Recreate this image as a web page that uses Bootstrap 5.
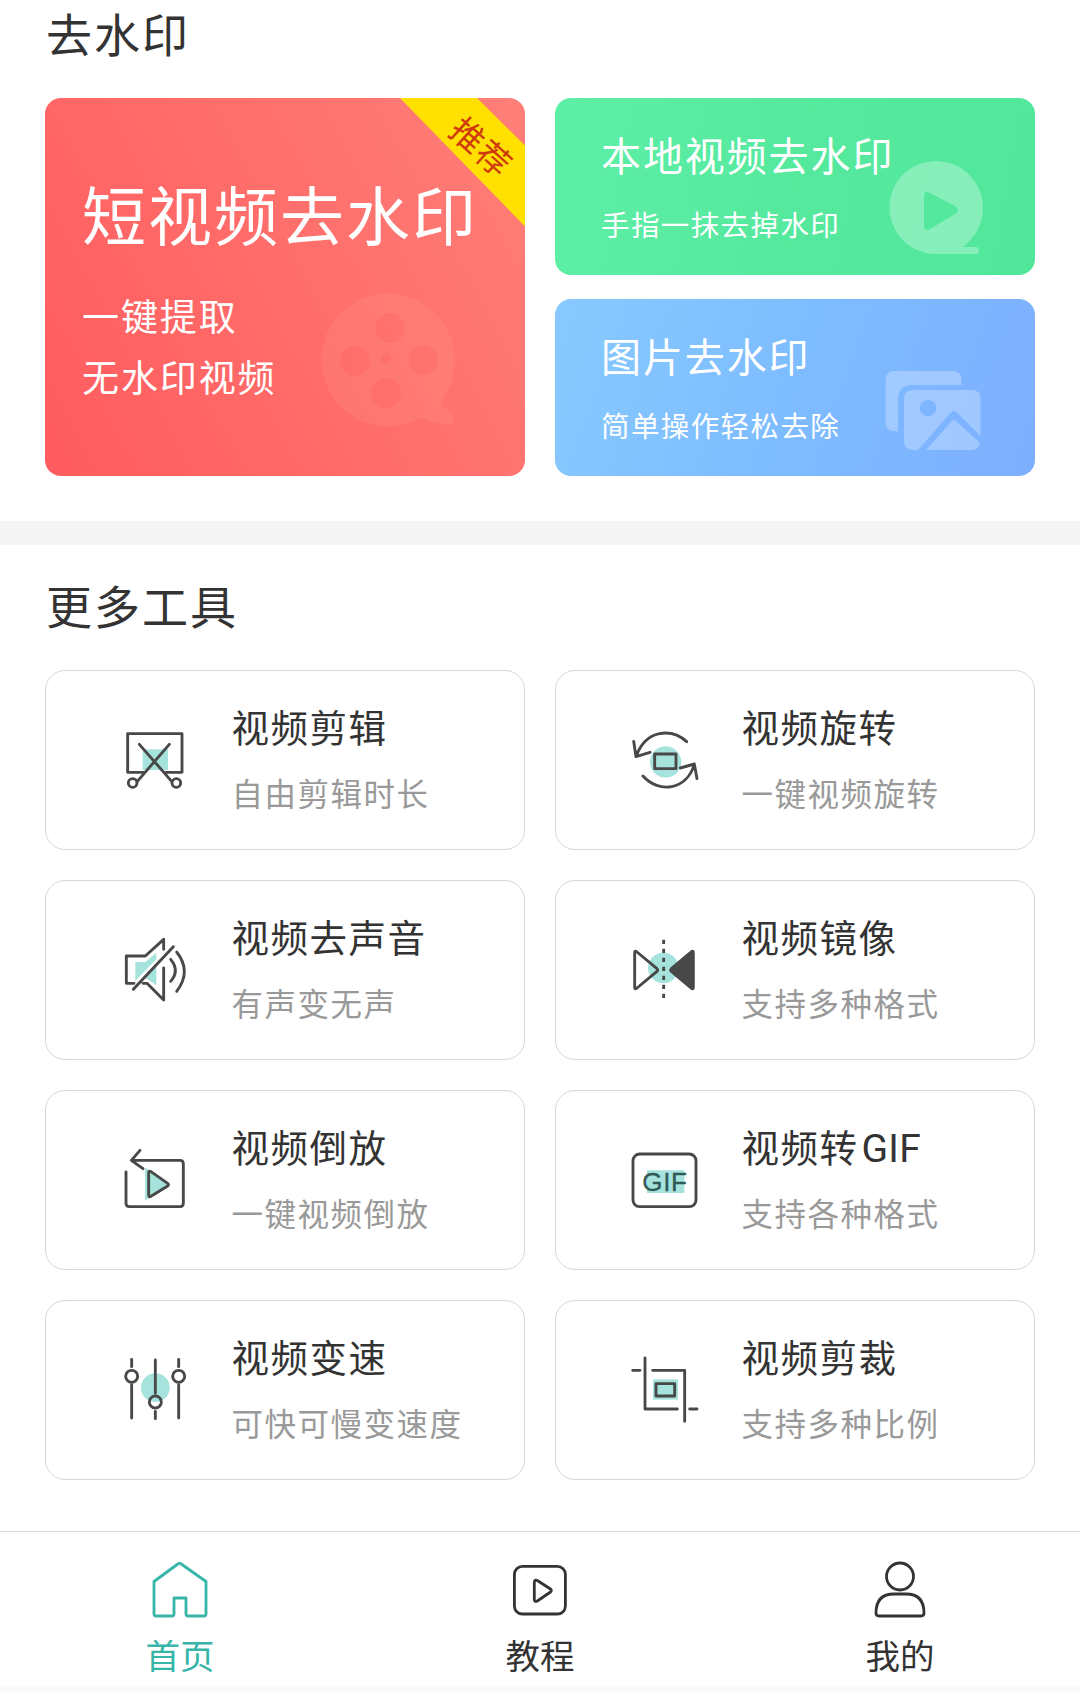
<!DOCTYPE html>
<html lang="zh-CN">
<head>
<meta charset="utf-8">
<meta name="viewport" content="width=device-width, initial-scale=1">
<title>去水印</title>
<link href="https://cdn.jsdelivr.net/npm/bootstrap@5.3.0/dist/css/bootstrap.min.css" rel="stylesheet">
<style>
body{font-family:"Noto Sans CJK SC","Noto Sans",sans-serif;background:#fff;color:#333;overflow-x:hidden}
.page{width:1080px;height:1692px;background:linear-gradient(#fff 0 1687px,#fafafa 1687px)}
.wrap{padding:0 45px}
.sec-title{font-size:46px;letter-spacing:2px;line-height:66px;margin:0;padding-left:1px;color:#333;font-weight:400}
.first-title{line-height:64px;padding-bottom:34px}
.more-title{padding-top:26px;padding-bottom:33px}
.gap-x{gap:30px}
.hero{width:480px;height:378px;border-radius:16px;color:#fff}
.hero-red{background:linear-gradient(62deg,#ff5b5e 0%,#ff6b69 45%,#ff7f78 100%);padding:79px 0 0 37px}
.hero-red h3{font-size:64px;letter-spacing:2px;line-height:70px;margin:0 0 38px;font-weight:400}
.hero-red p{font-size:37px;letter-spacing:1.9px;line-height:61px;margin:0}
.mini{height:177px;border-radius:16px;color:#fff;padding:30px 0 0 46px}
.mini h3{font-size:40px;letter-spacing:1.9px;line-height:52px;margin:0 0 24px;font-weight:400}
.mini p{font-size:28.5px;letter-spacing:1.4px;line-height:40px;margin:0}
.mini-green{background:linear-gradient(100deg,#5eefa6,#55e99e 50%,#51e79b)}
.mini-blue{background:linear-gradient(110deg,#88caff,#7dbcff 50%,#7eafff)}
.deco{position:absolute;left:0;top:0;width:100%;height:100%}
.ribbon-text{position:absolute;left:397px;top:26px;width:80px;line-height:44px;font-size:33.5px;letter-spacing:1px;text-align:center;color:#cf3a0c;transform:rotate(42deg)}
.strip{height:24px;background:#f5f5f5;margin-top:45px}
.tools{display:grid;grid-template-columns:480px 480px;gap:30px}
.tool{height:180px;border:1px solid #d6d6d6;border-radius:20px;padding-left:69px;background:#fff}
.tool svg{width:80px;height:80px;flex:none;fill:none;stroke:#484848;stroke-width:8.6;stroke-linecap:round;stroke-linejoin:round}
.tool .tint{fill:#a5e3dc;stroke:none}
.tool-text{margin-left:36.5px;padding-bottom:2px}
.tool h4{font-size:37.5px;letter-spacing:1.5px;line-height:50px;margin:0 0 16px;color:#333;font-weight:400}
.tool p{font-size:31.5px;letter-spacing:1.5px;line-height:50px;margin:0;color:#999}
.latin{font-family:Roboto,sans-serif;font-size:39px;letter-spacing:.3px;line-height:1;margin-left:3px}
.tabs{border-top:1px solid #d6d6d6;height:160px;margin-top:51px}
.tab{width:360px;color:#333;font-size:34.5px;line-height:46px;padding-top:26px;text-decoration:none}
.tab svg{width:64px;height:64px;fill:none;stroke:currentColor;stroke-width:2.8;stroke-linejoin:round;margin-bottom:9px}
.tab.on{color:#37b5a8}
</style>
</head>
<body>
<div class="page d-flex flex-column">
  <section class="wrap">
    <h2 class="sec-title first-title">去水印</h2>
    <div class="d-flex gap-x">
      <div class="hero hero-red position-relative overflow-hidden">
        <svg class="deco" viewBox="45 98 480 378">
          <path fill="#ffb09a" fill-opacity=".15" fill-rule="evenodd" d="M388 293.500A66.500 66.500 0 0 1 454.500 360C454.500 378 450 390 441 402C442 410 453 410 453 416V423C439 426 428 421 421 417C411 423 400 426.500 388 426.500A66.500 66.500 0 0 1 388 293.500zM390 313a15 15 0 1 0 .1 0zM355 346a15 15 0 1 0 .1 0zM423 345a15 15 0 1 0 .1 0zM386 378a15 15 0 1 0 .1 0zM386 354a5 5 0 1 0 .1 0z"/>
          <path fill="#ffe000" d="M400 98h77l48 47.500v81z"/>
        </svg>
        <span class="ribbon-text">推荐</span>
        <h3 class="position-relative">短视频去水印</h3>
        <p class="position-relative">一键提取<br>无水印视频</p>
      </div>
      <div class="d-flex flex-column justify-content-between flex-fill">
        <div class="mini mini-green position-relative overflow-hidden">
          <svg class="deco" viewBox="555 98 480 177">
            <path fill="#fff" fill-opacity=".3" fill-rule="evenodd" d="M936 161a47 47 0 0 1 47 47c0 16-8 30-20 39h13q3 0 3 3.500t-3 3.500h-40a46.500 46.500 0 0 1 0-93zM924 197v28q0 7 6 4l25-15q6-4 0-8l-25-13q-6-3-6 4z"/>
          </svg>
          <h3 class="position-relative">本地视频去水印</h3>
          <p class="position-relative">手指一抹去掉水印</p>
        </div>
        <div class="mini mini-blue position-relative overflow-hidden">
          <svg class="deco" viewBox="555 299 480 177">
            <g fill="#fff" fill-opacity=".27">
              <path d="M894 371h58q9.500 0 9.500 9v5H913q-15 0-15 15v31.500q-12.500 0-12.500-9V380q0-9 8.500-9z"/>
              <path fill-rule="evenodd" d="M912 390h60q8.500 0 8.500 8.500V436L957 412.500q-3-3-6 0L918 450h-6q-8-1-8-9v-42.500q0-8.500 8-8.500zM928 400a8.200 8.200 0 1 0 .1 0z"/>
              <path d="M926 450l26-29q2-2 4 0l24 22q-1 7-8 7z"/>
            </g>
          </svg>
          <h3 class="position-relative">图片去水印</h3>
          <p class="position-relative">简单操作轻松去除</p>
        </div>
      </div>
    </div>
  </section>
  <div class="strip flex-shrink-0"></div>
  <section class="wrap">
    <h2 class="sec-title more-title">更多工具</h2>
    <div class="tools">
      <div class="tool d-flex align-items-center">
        <svg viewBox="225 180 240 240"><path class="tint" d="M308 268h76v62h-76z"/><path d="M314 337h-51V221h163v116h-48M298 253l97 111M388 253l-96 111"/><circle cx="278" cy="369" r="13"/><circle cx="409" cy="369" r="13"/></svg>
        <div class="tool-text"><h4>视频剪辑</h4><p>自由剪辑时长</p></div>
      </div>
      <div class="tool d-flex align-items-center">
        <svg viewBox="225 180 240 240"><circle class="tint" cx="347" cy="306" r="47"/><path d="M314 282h64v44h-64zM410 245c-46-42-122-36-151 43M251 244l7 46 42-13M279 348c48 54 130 42 154-34M391 324l42-12 8 44"/></svg>
        <div class="tool-text"><h4>视频旋转</h4><p>一键视频旋转</p></div>
      </div>
      <div class="tool d-flex align-items-center">
        <svg viewBox="225 180 240 240"><path class="tint" d="M286 276h30l33-28v20l-63 64zM349 288v58l-34-24z"/><path d="M282 340h-23v-82h57l55-50v30M371 294v96l-50-50h-12M280 358L400 230M392 268q28 34 0 66M410 246q46 58 0 118"/></svg>
        <div class="tool-text"><h4>视频去声音</h4><p>有声变无声</p></div>
      </div>
      <div class="tool d-flex align-items-center">
        <svg viewBox="225 180 240 240"><circle class="tint" cx="340" cy="294" r="46"/><path fill="#fff" stroke="none" d="M254 244v110l40-34v-42z"/><path d="M254 248v104q0 8 7 2l60-50q4-4 0-8l-60-50q-7-6-7 2z"/><path fill="#484848" d="M430 248v104q0 8-7 2l-59-50q-4-4 0-8l59-50q7-6 7 2z"/><path stroke-linecap="butt" stroke-dasharray="13 14" d="M341 209v176"/></svg>
        <div class="tool-text"><h4>视频镜像</h4><p>支持多种格式</p></div>
      </div>
      <div class="tool d-flex align-items-center">
        <svg viewBox="225 180 240 240"><path class="tint" d="M315 262l74 52-74 48z"/><path d="M258 276v94q0 10 10 10h152q10 0 10-10V251q0-10-10-10H276M300 211l-26 30 35 25M326 279v66q0 8 7 4l50-31q5-4 0-8l-50-35q-7-4-7 4z"/></svg>
        <div class="tool-text"><h4>视频倒放</h4><p>一键视频倒放</p></div>
      </div>
      <div class="tool d-flex align-items-center">
        <svg viewBox="225 180 240 240"><path class="tint" d="M291 271h112v68H291z"/><rect x="249" y="222" width="189" height="158" rx="20"/><text x="344" y="334" text-anchor="middle" font-family="Liberation Sans" font-size="78" textLength="134" fill="#2f5a58" stroke="#2f5a58" stroke-width="1">GIF</text></svg>
        <div class="tool-text"><h4>视频转<span class="latin">GIF</span></h4><p>支持各种格式</p></div>
      </div>
      <div class="tool d-flex align-items-center">
        <svg viewBox="225 180 240 240"><circle class="tint" cx="346" cy="293" r="43"/><path d="M275 208v22M275 284v100M416 208v22M416 284v100M346 210v100M346 364v22"/><circle cx="275" cy="259" r="18"/><circle cx="416" cy="259" r="18"/><circle cx="346" cy="336" r="18"/></svg>
        <div class="tool-text"><h4>视频变速</h4><p>可快可慢变速度</p></div>
      </div>
      <div class="tool d-flex align-items-center">
        <svg viewBox="225 180 240 240"><path class="tint" d="M309 268h75v61h-75z"/><path d="M318 281h56v37h-56zM248 241h22M285 204v153h97M308 241h96v153M419 357h22"/></svg>
        <div class="tool-text"><h4>视频剪裁</h4><p>支持多种比例</p></div>
      </div>
    </div>
  </section>
  <nav class="tabs d-flex">
    <a class="tab on d-flex flex-column align-items-center" href="#"><svg viewBox="0 0 64 64"><path d="M30.500 5.500q1-.8 2 0L58 23.500V56q0 2-2 2H40q-2 0-2-2V40H26v16q0 2-2 2H8q-2 0-2-2V23.500z"/></svg>首页</a>
    <a class="tab d-flex flex-column align-items-center" href="#"><svg viewBox="0 0 64 64"><rect x="6.400" y="8.400" width="51" height="47.600" rx="8"/><path d="M26.300 25v16q0 3.500 3 2L42.500 34q1.800-1.500 0-3L29.300 22.500Q26.300 21 26.300 25z"/></svg>教程</a>
    <a class="tab d-flex flex-column align-items-center" href="#"><svg viewBox="0 0 64 64"><circle cx="32" cy="18.500" r="13.500"/><path d="M8 55q0-19 18-19h12q18 0 18 19 0 3-3 3H11q-3 0-3-3z"/></svg>我的</a>
  </nav>
</div>
<script src="https://cdn.jsdelivr.net/npm/bootstrap@5.3.0/dist/js/bootstrap.bundle.min.js"></script>
</body>
</html>
